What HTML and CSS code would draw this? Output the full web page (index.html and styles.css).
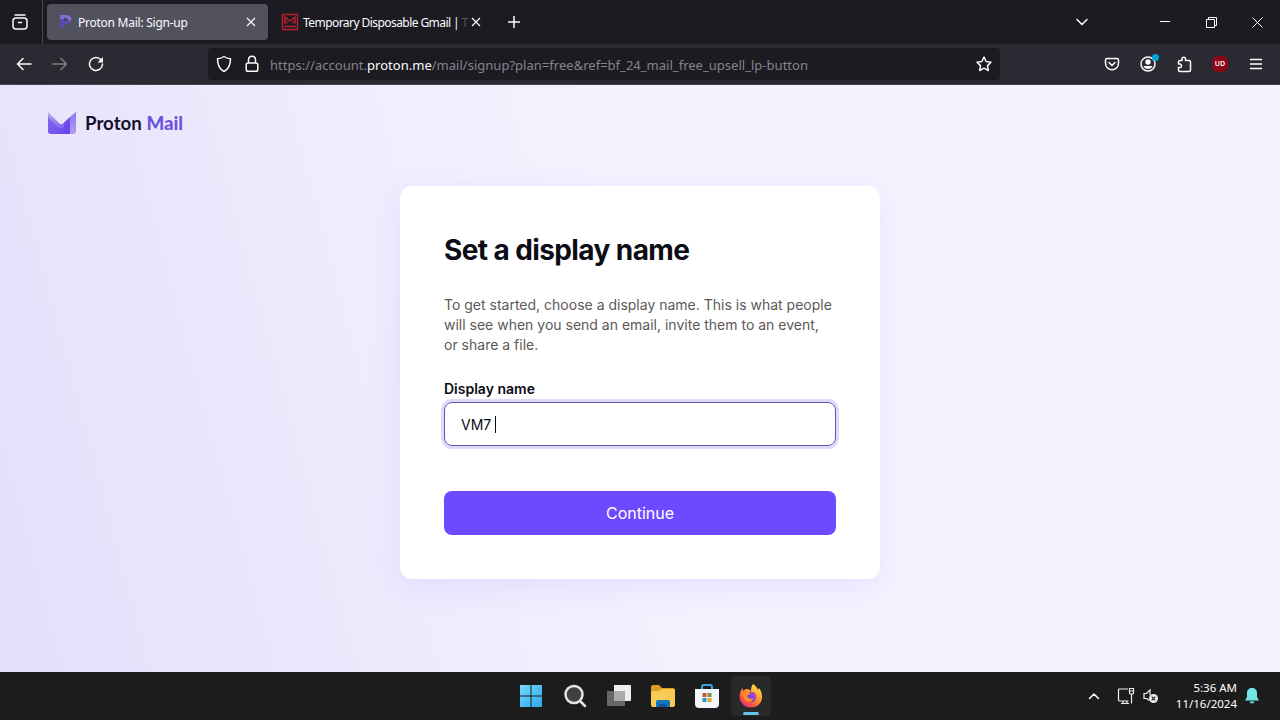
FILE: index.html
```html
<!DOCTYPE html>
<html lang="en">
<head>
    <meta charset="UTF-8">
    <meta name="viewport" content="width=device-width, initial-scale=1.0">
    <title>Proton Mail: Sign-up</title>
    <link rel="stylesheet" href="styles.css">
</head>
<body>
<header class="browser">
    <div class="tabs">
        <div class="view-button">
            <svg width="18" height="18" viewBox="0 0 18 18" class="line"><path d="M4 2h10M2 8c0-2 1-3 3-3h8c2 0 3 1 3 3v5c0 2-1 3-3 3H5c-2 0-3-1-3-3zM7.500 9.500h3"/></svg>
        </div>
        <div class="tab active">
            <svg width="14" height="18" viewBox="0 0 14 18"><path fill="#5a4bb0" d="M1 2h6c7 0 7 9 0 9H5v2l-4 4z"/><path fill="#7d70c9" d="M1 2h6c5 0 7 4 4 7-1-3-3-3-5-3H1z"/><path fill="#454168" d="M5 5h2c2 0 2 3 0 3H5z"/></svg>
            <span class="tab-title">Proton Mail: Sign-up</span>
            <svg class="tab-close" width="10" height="10" viewBox="0 0 10 10"><path d="m1 1 8 8M9 1 1 9"/></svg>
        </div>
        <div class="tab">
            <svg width="18" height="18" viewBox="0 0 18 18" fill="none" stroke="#b51f32" stroke-width="1.400"><path d="M1.500 1.500h15v15h-15z"/><path d="M4 11V4l5 4 5-4v7M3 13.500h12M4 8l3 2M14 8l-3 2"/></svg>
            <span class="tab-title temp">Temporary Disposable Gmail | <i>T</i></span>
            <svg class="tab-close" width="10" height="10" viewBox="0 0 10 10"><path d="m1 1 8 8M9 1 1 9"/></svg>
        </div>
        <svg class="new-tab line" width="12" height="12" viewBox="0 0 12 12"><path d="M6 .5v11M.5 6h11"/></svg>
        <div class="window-controls">
            <svg class="all-tabs line" width="14" height="14" viewBox="0 0 14 14"><path d="m2 4.500 5 5 5-5"/></svg>
            <span><svg width="10" height="10" viewBox="0 0 10 10"><path d="M0 4.500h10"/></svg></span>
            <span><svg width="11" height="11" viewBox="0 0 11 11"><path d="M.5 2.500h8v8h-8zM2.500 2.500v-2h8v8h-2"/></svg></span>
            <span><svg width="11" height="11" viewBox="0 0 11 11"><path d="m.5.5 10 10m0-10-10 10"/></svg></span>
        </div>
    </div>

    <div class="toolbar">
        <span class="tool"><svg class="line" width="16" height="16" viewBox="0 0 16 16"><path d="M15 8H1.500M7 2.500 1.500 8 7 13.500"/></svg></span>
        <span class="tool disabled"><svg class="line" width="16" height="16" viewBox="0 0 16 16"><path d="M1 8h13.500M9 2.500 14.500 8 9 13.500"/></svg></span>
        <span class="tool"><svg class="line" width="16" height="16" viewBox="0 0 16 16"><path d="M13 3.800A6.500 6.500 0 1 0 14.500 8"/><path fill="#fbfbfe" stroke="none" d="M15 1v5.500H9.500z"/></svg></span>
        <div class="urlbar">
            <svg class="line" width="16" height="18" viewBox="0 0 16 18"><path d="M8 1.500c2 1.500 4 2 6.500 2.300C14.500 10 13 14 8 16.500 3 14 1.500 10 1.500 3.800 4 3.500 6 3 8 1.500z"/></svg>
            <svg class="line lock" width="14" height="18" viewBox="0 0 14 18"><path d="M3.500 8V5c0-5 7-5 7 0v3M3 8h8c1 0 1.800.8 1.800 1.800v4.700c0 1-.8 1.800-1.800 1.800H3c-1 0-1.800-.8-1.800-1.800V9.800C1.200 8.800 2 8 3 8z"/></svg>
            <span class="url">https://account.<b>proton.me</b>/mail/signup?plan=free&amp;ref=bf_24_mail_free_upsell_lp-button</span>
            <svg class="line star" width="16" height="16" viewBox="0 0 16 16"><path d="m8 1 2.100 4.500 4.900.7-3.500 3.400.9 4.900L8 12.200l-4.400 2.300.9-4.900L1 6.200l4.900-.7z"/></svg>
        </div>
        <div class="extensions">
            <span class="tool"><svg class="line" width="16" height="16" viewBox="0 0 16 16"><path d="M3 2.500h10c1 0 1.500.5 1.500 1.500v3c0 9-13 9-13 0V4c0-1 .5-1.500 1.500-1.500zM5 6.500l3 3 3-3"/></svg></span>
            <span class="tool account"><svg class="line" width="16" height="16" viewBox="0 0 16 16"><circle cx="8" cy="8" r="7"/><circle cx="8" cy="6" r="2.700" fill="#fbfbfe" stroke="none"/><path fill="#fbfbfe" stroke="none" d="M3.500 10h9c-1 4-8 4-9 0z"/></svg></span>
            <span class="tool"><svg class="line" width="16" height="17" viewBox="0 0 16 17"><path d="M6 4.500V3c0-2.500 3.500-2.500 3.500 0v1.500H13c1 0 1.500.5 1.500 1.500v8c0 1-.5 1.500-1.500 1.500H4c-1 0-1.500-.5-1.500-1.500v-2.500H4c2 0 2-3.500 0-3.500H2.500V6c0-1 .5-1.500 1.500-1.500z"/></svg></span>
            <span class="tool"><span class="ublock">UD</span></span>
            <span class="tool"><svg class="line" width="14" height="12" viewBox="0 0 14 12"><path d="M1.500 1.500h11M1.500 6h11M1.500 10.500h11"/></svg></span>
        </div>
    </div>
</header>

<main class="page">
    <div class="logo">
        <svg width="28" height="22" viewBox="0 0 28 22">
            <defs>
                <linearGradient id="fold" x1="0" y1="0" x2=".6" y2="1"><stop stop-color="#b9adef"/><stop offset="1" stop-color="#7454ef"/></linearGradient>
                <linearGradient id="side" x1="0" y1="0" x2="0" y2="1"><stop stop-color="#8d76e8"/><stop offset="1" stop-color="#b39df7"/></linearGradient>
            </defs>
            <path fill="url(#fold)" d="M0 0l11 11c1.500 1.500 3 1.500 4.500 0L22 5v17H3c-2 0-3-1-3-3z"/>
            <path fill="#6a49ee" d="M0 5l10 10c2 2 4 1.500 6-.5L22 8v14H3c-2 0-3-1-3-3z" opacity=".6"/>
            <path fill="#6841e9" d="M16 10.500L22 5v17h-6z" opacity=".6"/>
            <path fill="url(#side)" d="M22 5l6-5v19c0 2-1 3-3 3h-3z"/>
        </svg>
        <span class="wordmark">Proton <b>Mail</b></span>
    </div>

    <section class="card">
        <h1>Set a display name</h1>
        <p>To get started, choose a display name. This is what people<br>will see when you send an email, invite them to an event,<br>or share a file.</p>
        <div class="label">Display name</div>
        <div class="field">VM7<span class="caret"></span></div>
        <button class="continue">Continue</button>
    </section>
</main>

<footer class="taskbar">
    <div class="apps">
        <span class="app"><svg width="24" height="24" viewBox="0 0 24 24"><defs><linearGradient id="win" x1="0" y1="0" x2="1" y2="1"><stop stop-color="#73daff"/><stop offset="1" stop-color="#2da8ee"/></linearGradient></defs><path fill="url(#win)" d="M1 1h10.500v10.500H1zM12.500 1H23v10.500H12.500zM1 12.500h10.500V23H1zM12.500 12.500H23V23H12.500z"/></svg></span>
        <span class="app"><svg width="24" height="24" viewBox="0 0 24 24" fill="#414141" stroke="#e4e4e4" stroke-width="2.500"><path d="m17.500 17.500 4.500 4.500" stroke-linecap="round"/><circle cx="11" cy="10.500" r="8.500"/></svg></span>
        <span class="app"><svg width="26" height="24" viewBox="0 0 26 24"><path fill="#efefef" d="M8 1h16q1 0 1 1v14q0 1-1 1H8z"/><path fill="#666" d="M2 7h17v14q0 1-1 1H2q-1 0-1-1V8q0-1 1-1z"/><path fill="#aaa" d="M8 7h11v10H8z"/></svg></span>
        <span class="app"><svg width="26" height="24" viewBox="0 0 26 24"><path fill="#d99d20" d="M1 3q0-2 2-2h6l3 3h11q2 0 2 2v8H1z"/><path fill="#f7cb55" d="M1 7h8l3-2h11q2 0 2 2v14q0 2-2 2H3q-2 0-2-2z"/><path fill="#1674ba" d="M6 23v-5q0-2 2-2h10q2 0 2 2v5z"/><path fill="#0f5b97" d="M9 20h8v3H9z"/></svg></span>
        <span class="app"><svg width="24" height="26" viewBox="0 0 24 26"><path fill="none" stroke="#38a9df" stroke-width="2" d="M7 8V4q0-2 2-2h6q2 0 2 2v4"/><path fill="#f2f5fa" d="M0 6h24v15q0 4-4 4H4q-4 0-4-4z"/><path fill="#c9573d" d="M7.500 10h4v4h-4z"/><path fill="#7d9440" d="M12.500 10h4v4h-4z"/><path fill="#219ac0" d="M7.500 15h4v4h-4z"/><path fill="#e0a533" d="M12.500 15h4v4h-4z"/></svg></span>
        <span class="app running"><svg width="24" height="24" viewBox="0 0 24 24">
            <defs><linearGradient id="fox" x1=".9" y1="0" x2=".2" y2="1"><stop stop-color="#fff04b"/><stop offset=".4" stop-color="#ffa62d"/><stop offset=".75" stop-color="#ff553f"/><stop offset="1" stop-color="#df238e"/></linearGradient></defs>
            <path fill="url(#fox)" d="M14 0c3 2 4 4 5 6l1-2c6 8 3 19-8 19.500C3 23.500-1 15 1 9c.5-2 1.500-4 3-5v3l3-2c3 0 5 1 5 3 0-3 0-6 2-8z"/>
            <circle cx="12" cy="13" r="5.200" fill="#7545dc"/>
            <path fill="#ff8a2b" d="M3 9c3-3 7-2 9 1-2 0-3 1-4 2 1 3 4 3 7 2-2 5-8 5-10 1z"/>
            <path fill="#b741c9" d="M12 8c5 0 7 5 3 8 1-4-1-5-3-5z"/>
        </svg></span>
    </div>
    <div class="tray">
        <svg class="line chevron" width="12" height="12" viewBox="0 0 12 12"><path d="m1.500 8.500 4.500-4.500 4.500 4.500"/></svg>
        <svg class="network" width="18" height="18" viewBox="0 0 18 18" fill="none" stroke="#eee" stroke-width="1.200"><path d="M11 2H2.500q-1 0-1 1v10q0 1 1 1h9M14.500 7v9.500M6 14v2.500M10 14v2.500M4 16.500h8M12.500 1.500h4v4.500q0 1-1 1h-2q-1 0-1-1zM12.500 4h4"/></svg>
        <svg class="volume" width="16" height="16" viewBox="0 0 16 16" fill="none" stroke="#eee" stroke-width="1.200"><path d="M6 12.500 4 10.500H1v-5h2.500L7 2v5"/><circle cx="10.500" cy="10.500" r="4.500" fill="#eee" stroke="none"/><path stroke="#222" d="m8.700 8.700 3.600 3.600m0-3.600-3.600 3.600"/></svg>
        <div class="clock">5:36 AM<br>11/16/2024</div>
        <svg class="bell" width="14" height="16" viewBox="0 0 14 16" fill="#72e6e7"><path d="M7 0c3 0 5 2 5 5v4l2 3.500H0L2 9V5c0-3 2-5 5-5zM4.500 13.500h5c-.5 2.500-4.500 2.500-5 0z"/></svg>
    </div>
</footer>
</body>
</html>
```
FILE: styles.css
```css
* {
    margin: 0; padding: 0; box-sizing: border-box;
}

body {
    width: 1280px;
    height: 720px;
    overflow: hidden;
    display: flex;
    flex-direction: column;
    font-family: Inter, sans-serif;
}

svg {
    display: block;
    flex-shrink: 0;
}

.line {
    fill: none;
    stroke: #fbfbfe;
    stroke-width: 1.5;
    stroke-linecap: round;
    stroke-linejoin: round;
}

.browser {
    height: 85px;
    background: #2b2a33;
    border-bottom: 1px solid #45434f;
    color: #fbfbfe;
    font-family: "Noto Sans", sans-serif;
}

.tabs {
    height: 44px;
    display: flex;
    align-items: center;
    background: #1c1b22;
}

.view-button {
    width: 43px;
    height: 44px;
    padding: 13px 0 0 11px;
    border-right: 1px solid #484752;
    margin-right: 4px;
}

.tab {
    width: 221px;
    height: 36px;
    padding: 0 12px;
    display: flex;
    align-items: center;
    border-radius: 4px;
    font-size: 12px;
}

.tab.active {
    background: #52515e;
}

.tab:not(.active) {
    width: 225px;
    padding-left: 13px;
}

.tab-title {
    margin-left: 5px;
    margin-right: auto;
    white-space: nowrap;
    letter-spacing: -0.25px;
}

.tab-title.temp {
    margin-left: 4px;
    letter-spacing: -0.56px;
}

.tab-title i {
    font-style: normal;
    color: #55545e;
}

.tab-close {
    fill: none;
    stroke: #fbfbfe;
    stroke-width: 1.2;
}

.new-tab {
    margin-left: 15px;
}

.window-controls {
    display: flex;
    align-items: center;
    margin-left: auto;
}

.window-controls span {
    width: 46px;
    display: flex;
    justify-content: center;
    fill: none;
    stroke: #fbfbfe;
}

.all-tabs {
    margin-right: 53px;
}

.toolbar {
    height: 40px;
    padding: 0 6px;
    display: flex;
    align-items: center;
}

.tool {
    width: 36px;
    height: 32px;
    display: flex;
    align-items: center;
    justify-content: center;
}

.disabled {
    opacity: 0.4;
}

.urlbar {
    width: 792px;
    height: 32px;
    margin-left: 94px;
    padding: 0 8px;
    display: flex;
    align-items: center;
    background: #1c1b22;
    border-radius: 4px;
}

.lock {
    margin-left: 13px;
}

.url {
    margin-left: 11px;
    padding-top: 2px;
    font-size: 13px;
    letter-spacing: 0.02px;
    color: #85848d;
    white-space: nowrap;
}

.url b {
    font-weight: 400;
    color: #fbfbfe;
}

.star {
    margin-left: auto;
}

.extensions {
    display: flex;
    margin-left: auto;
}

.account {
    position: relative;
}

.account::after {
    content: "";
    position: absolute;
    top: 6px;
    right: 7px;
    width: 7px;
    height: 7px;
    border-radius: 50%;
    background: #00a5d4;
}

.ublock {
    width: 16px;
    height: 16px;
    border-radius: 6px;
    background: #8c0713;
    font-size: 7px;
    font-weight: 600;
    line-height: 16px;
    text-align: center;
}

.page {
    height: 587px;
    padding: 25px 48px 0;
    background: linear-gradient(75deg, #e3dffb 0%, #e9e6fc 18%, #f0edfe 35%, #f5f3ff 52%, #f5f3ff 100%);
}

.logo {
    height: 26px;
    display: flex;
    align-items: center;
}

.wordmark {
    margin-left: 9px;
    font-family: Lato, sans-serif;
    font-size: 18.7px;
    font-weight: 700;
    line-height: 26px;
    color: #17122e;
}

.wordmark b {
    color: #6d52df;
}

.card {
    width: 480px;
    height: 393px;
    margin: 50px auto 0;
    padding: 44px;
    background: #fff;
    border-radius: 12px;
    box-shadow: 0 8px 32px rgba(109, 74, 255, 0.1);
}

h1 {
    font-size: 28px;
    line-height: 40px;
    letter-spacing: -0.6px;
    color: #0c0c14;
}

p {
    margin-top: 25px;
    font-size: 14px;
    line-height: 20px;
    color: #5c5958;
    white-space: nowrap;
}

.label {
    margin-top: 24px;
    font-size: 14px;
    font-weight: 600;
    line-height: 20px;
    color: #0c0c14;
}

.field {
    height: 44px;
    margin-top: 3px;
    padding: 0 16px;
    display: flex;
    align-items: center;
    border: 1px solid #6754b1;
    border-radius: 8px;
    box-shadow: 0 0 0 3px #e0daf8;
    font-size: 14px;
    color: #0c0c14;
}

.caret {
    width: 1px;
    height: 17px;
    margin-left: 4px;
    background: #0c0c14;
}

.continue {
    display: block;
    width: 100%;
    height: 44px;
    margin-top: 45px;
    border: none;
    border-radius: 8px;
    background: #6d4aff;
    color: #fff;
    font: 16px/44px Inter, sans-serif;
}

.taskbar {
    height: 48px;
    position: relative;
    display: flex;
    align-items: center;
    justify-content: center;
    background: #1c1c1c;
    font-family: "Noto Sans", sans-serif;
    color: #fff;
}

.apps {
    display: flex;
    align-items: center;
    gap: 4px;
    margin-left: 1px;
}

.app {
    width: 40px;
    height: 40px;
    display: flex;
    align-items: center;
    justify-content: center;
    border-radius: 4px;
}

.running {
    position: relative;
    background: #292929;
}

.running::after {
    content: "";
    position: absolute;
    bottom: 1px;
    left: 12px;
    width: 16px;
    height: 3px;
    border-radius: 2px;
    background: #62c6ed;
}

/* status area sits at the right edge, apps stay centred */
.tray {
    position: absolute;
    right: 21px;
    top: 0;
    height: 48px;
    display: flex;
    align-items: center;
}

.network {
    margin-left: 17px;
}

.volume {
    margin-left: 8px;
}

.clock {
    width: 66px;
    margin-left: 12px;
    font-size: 11.5px;
    line-height: 16px;
    text-align: right;
}

.bell {
    margin-left: 8px;
}
```
